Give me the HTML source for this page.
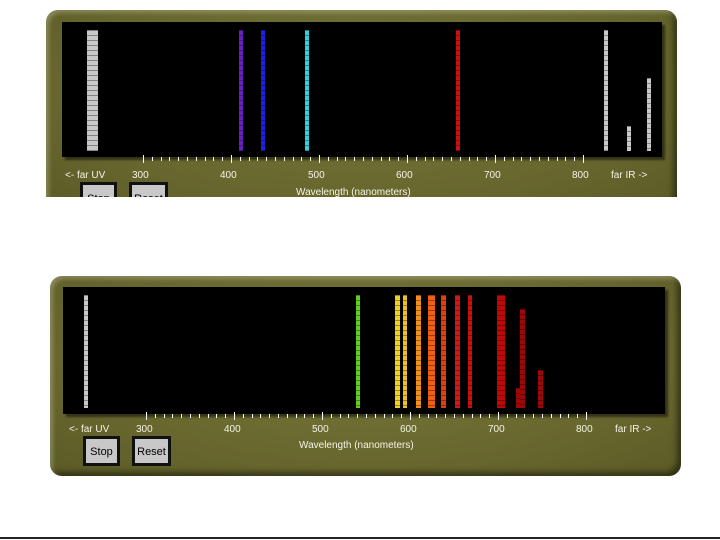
<!DOCTYPE html>
<html><head><meta charset="utf-8"><style>
body{margin:0;width:720px;height:540px;background:#fff;position:relative;overflow:hidden;font-family:"Liberation Sans",sans-serif}
.frame{position:absolute;background:radial-gradient(ellipse at 50% 40%,#77773a,#66652d 70%,#5a5a26);border-radius:12px;box-shadow:inset 3px 3px 4px rgba(255,255,230,.25),inset -4px -4px 6px rgba(0,0,0,.45)}
.scr{position:absolute;background:#000;box-shadow:3px 3px 2px rgba(0,0,0,.5)}
.t{position:absolute;color:#f4f4e4;font-size:10px;white-space:nowrap}
.btn{position:absolute;background:#c8c8c8;border:3px solid #111;box-sizing:border-box;font-size:11px;color:#000;text-align:center}
.ln{position:absolute;background-image:repeating-linear-gradient(rgba(0,0,0,.35) 0 1px,transparent 1px 5px)}
.tk{position:absolute;background:#fff;width:1px}
</style></head><body>
<div style="position:absolute;left:46px;top:0;width:631px;height:197px;overflow:hidden">
 <div class="frame" style="left:0;top:10px;width:631px;height:200px"></div>
 <div class="scr" style="left:16px;top:22px;width:600px;height:135px"></div>
 <div class="t" style="left:19px;top:170px">&lt;- far UV</div>
 <div class="t" style="left:86px;top:170px">300</div>
 <div class="t" style="left:174px;top:170px">400</div>
 <div class="t" style="left:262px;top:170px">500</div>
 <div class="t" style="left:350px;top:170px">600</div>
 <div class="t" style="left:438px;top:170px">700</div>
 <div class="t" style="left:526px;top:170px">800</div>
 <div class="t" style="left:565px;top:170px">far IR -&gt;</div>
 <div class="t" style="left:250px;top:187px">Wavelength (nanometers)</div>
 <div class="btn" style="left:34px;top:182px;width:37px;height:30px;padding-top:8px">Stop</div>
 <div class="btn" style="left:83px;top:182px;width:39px;height:30px;padding-top:8px">Reset</div>
</div>
<div class="frame" style="left:50px;top:276px;width:631px;height:200px"></div>
<div class="scr" style="left:63px;top:287px;width:602px;height:127px"></div>
<div class="t" style="left:69px;top:424px">&lt;- far UV</div>
<div class="t" style="left:136px;top:424px">300</div>
<div class="t" style="left:224px;top:424px">400</div>
<div class="t" style="left:312px;top:424px">500</div>
<div class="t" style="left:400px;top:424px">600</div>
<div class="t" style="left:488px;top:424px">700</div>
<div class="t" style="left:576px;top:424px">800</div>
<div class="t" style="left:615px;top:424px">far IR -&gt;</div>
<div class="t" style="left:299px;top:440px">Wavelength (nanometers)</div>
<div class="btn" style="left:83px;top:436px;width:37px;height:30px;padding-top:7px">Stop</div>
<div class="btn" style="left:132px;top:436px;width:39px;height:30px;padding-top:7px">Reset</div>
<div style="position:absolute;left:0;top:537px;width:720px;height:2px;background:#222"></div>
<div id="g"></div>
<script>
var g=document.getElementById('g'),h='';
function tk(x0,y){for(var i=0;i<=50;i++){var x=Math.round(x0+i*8.8),big=i%10==0;h+='<div class="tk" style="left:'+x+'px;top:'+(big?y:y+2)+'px;height:'+(big?8:4)+'px"></div>';}}
tk(143,155);tk(146,412);
function L(x,w,t,b,c){h+='<div class="ln" style="left:'+x+'px;width:'+w+'px;top:'+t+'px;height:'+(b-t)+'px;background-color:'+c+'"></div>';}
L(87,11,30,151,'#c8c8c8');L(239,4,30,151,'#6a1fc0');L(261,4,30,151,'#2020e0');L(305,4,30,151,'#30d0e0');L(456,4,30,151,'#d01010');
L(604,4,30,151,'#c8c8c8');L(627,4,126,151,'#c8c8c8');L(647,4,78,151,'#c8c8c8');
L(84,4,295,408,'#c8c8c8');L(356,4,295,408,'#60d020');L(395,5,295,408,'#f0d020');L(403,4,295,408,'#f0c020');
L(416,5,295,408,'#f09018');L(428,7,295,408,'#f06010');L(441,5,295,408,'#e04010');L(455,5,295,408,'#d01818');L(468,4,295,408,'#d01010');
L(497,8,295,408,'#c00808');L(516,6,388,408,'#a00808');L(520,5,309,408,'#a00808');L(538,5,370,408,'#a00808');
g.innerHTML=h;
</script>
</body></html>
